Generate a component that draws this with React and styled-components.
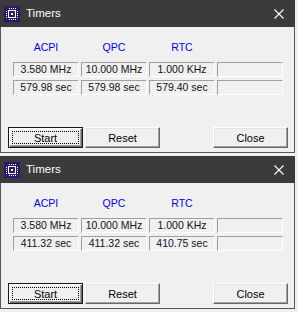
import React from 'react';
import styled, { createGlobalStyle } from 'styled-components';

const GlobalStyle = createGlobalStyle`
  body {
    margin: 0;
    background-color: #F0F0F0;
    font-family: "Liberation Sans", Arial, sans-serif;
  }
`;

const Page = styled.div`
  display: flex;
  flex-direction: column;
  gap: 3px;
  width: 295px;
`;

const Frame = styled.div`
  display: flex;
  flex-direction: column;
  width: 295px;
`;

const TitleBar = styled.div`
  display: flex;
  align-items: center;
  height: 27px;
  padding-left: 4px;
  background-color: #3B3B3B;
  box-sizing: border-box;
`;

const Title = styled.span`
  color: #FFFFFF;
  font-size: 11.5px;
  margin-left: 6px;
  margin-top: -1px;
`;

const CloseIcon = styled.div`
  display: flex;
  margin-left: auto;
  margin-right: 11px;
`;

const Body = styled.div`
  display: flex;
  flex-direction: column;
  background-color: #F0F0F0;
  border: 1px solid #585858;
  border-top: 0;
  padding: 13px 0 4px 0;
`;

const Grid = styled.div`
  display: grid;
  grid-template-columns: repeat(4, 66px);
  column-gap: 2px;
  row-gap: 3px;
  margin-left: 12px;
`;

const Label = styled.div`
  height: 14px;
  line-height: 14px;
  text-align: center;
  font-size: 10.5px;
  color: #0000EE;
  margin-bottom: 5px;
`;

const Value = styled.div`
  height: 15px;
  box-sizing: border-box;
  border-style: solid;
  border-width: 1px;
  border-color: #A0A0A0 #FFFFFF #FFFFFF #A0A0A0;
  font-size: 10.5px;
  line-height: 13px;
  text-align: center;
  color: #141414;
`;

const ButtonRow = styled.div`
  display: flex;
  gap: 2px;
  margin-top: 32px;
  padding: 0 6px 0 7px;
`;

const Spacer = styled.div`
  flex: 1;
`;

const Button = styled.button`
  position: relative;
  width: 75px;
  height: 21px;
  padding: 0;
  box-sizing: border-box;
  background-color: #F0F0F0;
  font-family: inherit;
  font-size: 11px;
  color: #000000;
  border: 1px solid;
  border-color: ${p => p.$default ? '#1A1A1A' : '#FFFFFF #696969 #696969 #FFFFFF'};
  box-shadow: ${p => p.$default
    ? 'inset 1px 1px #FFFFFF, inset -1px -1px #696969, inset -2px -2px #A0A0A0'
    : 'inset -1px -1px #A0A0A0, inset 1px 1px #E3E3E3'};

  &::after {
    content: '';
    display: ${p => p.$default ? 'block' : 'none'};
    position: absolute;
    inset: 3px;
    border: 1px dotted #000000;
  }
`;

const ChipIcon = () => (
  <svg width="16" height="16" viewBox="0 0 16 16">
    <rect width="16" height="16" fill="#2E1A6B" />
    {[4, 6, 8, 10].map(x => (
      <React.Fragment key={x}>
        <rect x={x + 1} y="2" width="1" height="1" fill="#FFFFFF" />
        <rect x={x + 1} y="13" width="1" height="1" fill="#FFFFFF" />
        <rect x="2" y={x + 1} width="1" height="1" fill="#FFFFFF" />
        <rect x="13" y={x + 1} width="1" height="1" fill="#FFFFFF" />
      </React.Fragment>
    ))}
    <rect x="4.5" y="4.5" width="7" height="7" fill="none" stroke="#FFFFFF" strokeWidth="1" />
    <rect x="7" y="7" width="2" height="2" fill="#FFFFFF" />
  </svg>
);

const XIcon = () => (
  <svg width="10" height="10" viewBox="0 0 10 10">
    <path d="M0.5 0.5 L9.5 9.5 M9.5 0.5 L0.5 9.5" stroke="#FFFFFF" strokeWidth="1.1" />
  </svg>
);

const TimerWindow = ({ values }) => (
  <Frame>
    <TitleBar>
      <ChipIcon />
      <Title>Timers</Title>
      <CloseIcon><XIcon /></CloseIcon>
    </TitleBar>
    <Body>
      <Grid>
        <Label>ACPI</Label>
        <Label>QPC</Label>
        <Label>RTC</Label>
        <Label />
        {values.map((v, i) => <Value key={i}>{v}</Value>)}
      </Grid>
      <ButtonRow>
        <Button $default>Start</Button>
        <Button>Reset</Button>
        <Spacer />
        <Button>Close</Button>
      </ButtonRow>
    </Body>
  </Frame>
);

const App = () => (
  <>
    <GlobalStyle />
    <Page>
      <TimerWindow values={['3.580 MHz', '10.000 MHz', '1.000 KHz', '', '579.98 sec', '579.98 sec', '579.40 sec', '']} />
      <TimerWindow values={['3.580 MHz', '10.000 MHz', '1.000 KHz', '', '411.32 sec', '411.32 sec', '410.75 sec', '']} />
    </Page>
  </>
);

export default App;
